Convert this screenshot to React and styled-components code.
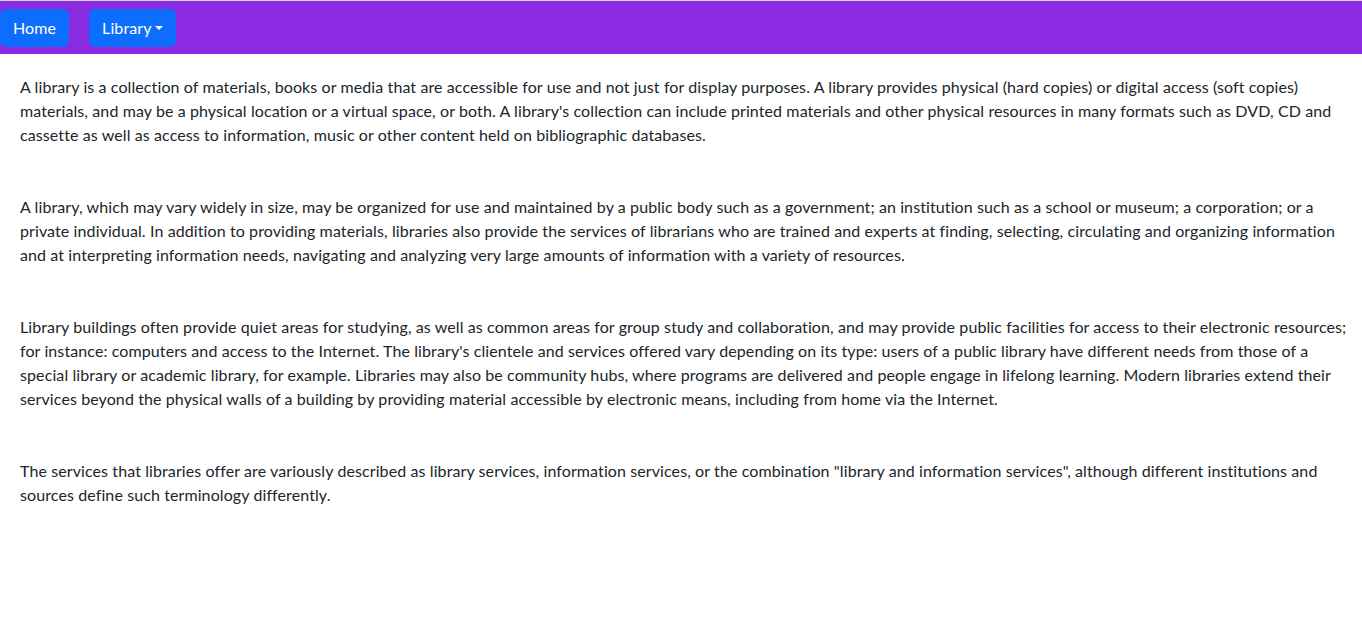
import React from "react"
import styled, { createGlobalStyle } from "styled-components"

const GlobalStyle = createGlobalStyle`
  * {
    box-sizing: border-box;
  }
  body {
    margin: 0;
    font-family: "Segoe UI", Lato, "Noto Sans", sans-serif;
    font-size: 16px;
    line-height: 24px;
    letter-spacing: 0.1px;
    color: #212529;
    background: #fff;
  }
`

const TopEdge = styled.div`
  height: 1px;
  background: #d6d6d6;
`

const NavBar = styled.nav`
  display: flex;
  align-items: center;
  gap: 20px;
  height: 53px;
  background: #8a2be2;
`

const NavButton = styled.button`
  display: inline-flex;
  align-items: center;
  gap: 3px;
  height: 38px;
  padding: 0 12px;
  border: 1px solid #0d6efd;
  border-radius: 6px;
  background: #0d6efd;
  color: #fff;
  font-family: inherit;
  font-size: 16px;
  line-height: 24px;
  letter-spacing: 0.1px;
  cursor: pointer;
`

const Caret = styled.span`
  width: 0;
  height: 0;
  margin-top: 1px;
  border-top: 4.5px solid #fff;
  border-left: 4.5px solid transparent;
  border-right: 4.5px solid transparent;
`

const Content = styled.main`
  padding: 21px 10px 21px 20px;
`

const Paragraph = styled.p`
  margin: 0 0 48px;
`

const paragraphs = [
  "A library is a collection of materials, books or media that are accessible for use and not just for display purposes. A library provides physical (hard copies) or digital access (soft copies) materials, and may be a physical location or a virtual space, or both. A library's collection can include printed materials and other physical resources in many formats such as DVD, CD and cassette as well as access to information, music or other content held on bibliographic databases.",
  "A library, which may vary widely in size, may be organized for use and maintained by a public body such as a government; an institution such as a school or museum; a corporation; or a private individual. In addition to providing materials, libraries also provide the services of librarians who are trained and experts at finding, selecting, circulating and organizing information and at interpreting information needs, navigating and analyzing very large amounts of information with a variety of resources.",
  "Library buildings often provide quiet areas for studying, as well as common areas for group study and collaboration, and may provide public facilities for access to their electronic resources; for instance: computers and access to the Internet. The library's clientele and services offered vary depending on its type: users of a public library have different needs from those of a special library or academic library, for example. Libraries may also be community hubs, where programs are delivered and people engage in lifelong learning. Modern libraries extend their services beyond the physical walls of a building by providing material accessible by electronic means, including from home via the Internet.",
  'The services that libraries offer are variously described as library services, information services, or the combination "library and information services", although different institutions and sources define such terminology differently.',
]

export default function App() {
  return (
    <>
      <GlobalStyle />
      <TopEdge />
      <NavBar>
        <NavButton>Home</NavButton>
        <NavButton>
          Library
          <Caret />
        </NavButton>
      </NavBar>
      <Content>
        {paragraphs.map((text, i) => (
          <Paragraph key={i}>{text}</Paragraph>
        ))}
      </Content>
    </>
  )
}
